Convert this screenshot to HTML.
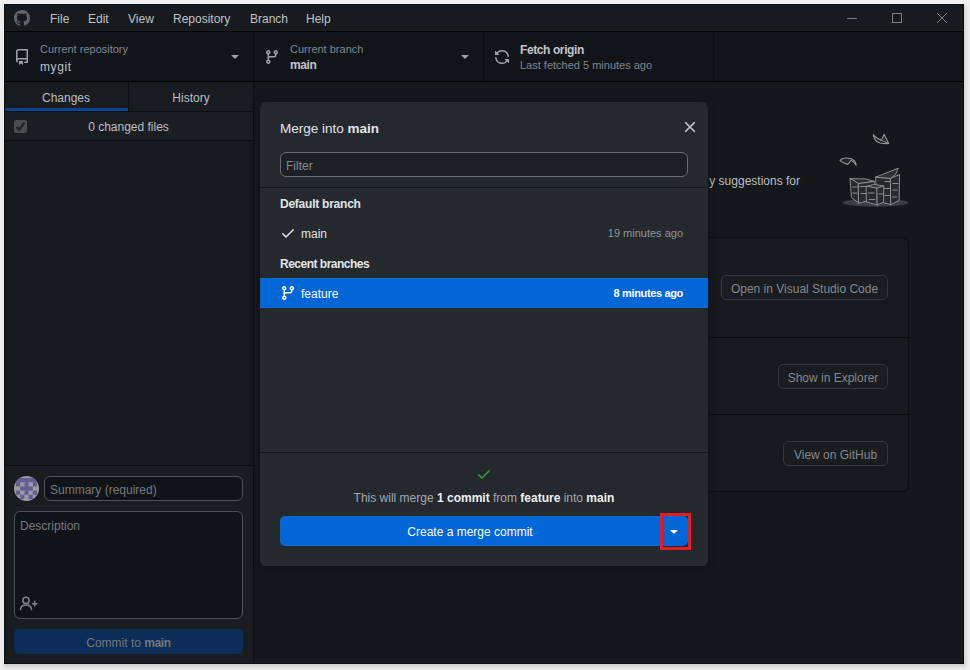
<!DOCTYPE html>
<html><head><meta charset="utf-8">
<style>
*{box-sizing:border-box;margin:0;padding:0}
html,body{width:970px;height:670px;overflow:hidden;background:#f0f0f0;font-family:"Liberation Sans",sans-serif;font-size:12px;color:#d1d5da}
.a{position:absolute;white-space:nowrap}
b{font-weight:bold;letter-spacing:-0.4px}
#win{position:absolute;left:4px;top:4px;width:960px;height:660px;background:#171b1e;overflow:hidden}
#sh{position:absolute;left:4px;top:4px;width:960px;height:660px;background:#222;box-shadow:1px 2px 4px 1px rgba(0,0,0,.15)}
#hl{position:absolute;left:3px;top:3px;width:961px;height:661px;background:#f3f3f3}
#edge{position:absolute;left:4px;top:4px;width:960px;height:660px;border:1px solid #0a0d10;z-index:5}
#title{position:absolute;left:0;top:0;width:960px;height:28px;background:#171b1e;border-bottom:1px solid #000}
.menu{position:absolute;top:8px;font-size:12px;color:#bfc2c6;line-height:14px}
#toolbar{position:absolute;left:0;top:28px;width:960px;height:50px;background:#121518;border-bottom:1px solid #000}
.tsec{position:absolute;top:0;height:49px;border-right:1px solid #0b0c0d}
.lbl{position:absolute;font-size:11px;color:#80868c;line-height:13px;white-space:nowrap}
.val{position:absolute;font-size:12px;color:#c2c6cb;line-height:14px;white-space:nowrap}
#left{position:absolute;left:0;top:78px;width:250px;height:582px;background:#16191c;border-right:1px solid #0c0e10}
#right{position:absolute;left:250px;top:78px;width:710px;height:582px;background:#15181b}
#modal{position:absolute;left:256px;top:98px;width:448px;height:464px;background:#24292e;border-radius:6px;overflow:hidden;box-shadow:0 2px 10px rgba(0,0,0,.4)}
.btn2{position:absolute;height:25px;border:1px solid #34383d;background:#1a1d20;border-radius:5px;color:#84888d;font-size:12px;line-height:26px;text-align:center}
</style></head>
<body>
<div id="sh"></div>
<div id="hl"></div>
<div id="win">
  <div id="title">
    <svg class="a" style="left:10px;top:6px" width="16" height="16" viewBox="0 0 16 16"><path fill-rule="evenodd" fill="#616568" d="M8 0C3.58 0 0 3.58 0 8c0 3.540 2.290 6.530 5.470 7.590.4.07.55-.15.55-.38 0-.19-.01-.82-.01-1.49-2.010.37-2.530-.49-2.690-.94-.09-.23-.48-.94-.82-1.13-.28-.15-.68-.52-.01-.53.63-.01 1.080.58 1.230.82.72 1.210 1.870.87 2.330.66.07-.52.28-.87.51-1.07-1.780-.2-3.640-.89-3.640-3.950 0-.87.31-1.590.82-2.150-.08-.2-.36-1.020.08-2.120 0 0 .67-.21 2.200.82.64-.18 1.320-.27 2-.27.68 0 1.360.09 2 .27 1.530-1.040 2.200-.82 2.200-.82.44 1.100.16 1.920.08 2.120.51.56.82 1.270.82 2.150 0 3.070-1.870 3.750-3.650 3.950.29.25.54.73.54 1.480 0 1.070-.01 1.930-.01 2.200 0 .21.15.46.55.38A8.013 8.013 0 0 0 16 8c0-4.42-3.58-8-8-8z"/></svg>
    <div class="menu" style="left:46px">File</div>
    <div class="menu" style="left:84px">Edit</div>
    <div class="menu" style="left:124px">View</div>
    <div class="menu" style="left:169px">Repository</div>
    <div class="menu" style="left:246px">Branch</div>
    <div class="menu" style="left:302px">Help</div>
    <div class="a" style="left:843px;top:14px;width:10px;height:1px;background:#7d8085"></div>
    <div class="a" style="left:888px;top:9px;width:10px;height:10px;border:1px solid #7d8085"></div>
    <svg class="a" style="left:932px;top:8px" width="12" height="12" viewBox="0 0 12 12"><path d="M1 1L11 11M11 1L1 11" stroke="#7d8085" stroke-width="1"/></svg>
  </div>
  <div id="toolbar">
    <div class="tsec" style="left:0;width:250px"></div>
    <div class="tsec" style="left:250px;width:230px"></div>
    <div class="tsec" style="left:480px;width:230px"></div>
    <svg class="a" style="left:10px;top:17px" width="16" height="16" viewBox="0 0 16 16"><path fill-rule="evenodd" fill="#9ea2a7" d="M2 2.5A2.5 2.5 0 0 1 4.5 0h8.75a.75.75 0 0 1 .75.75v12.5a.75.75 0 0 1-.75.75h-2.5a.75.75 0 1 1 0-1.5h1.750v-2h-8a1 1 0 0 0-.714 1.700.75.75 0 0 1-1.072 1.050A2.495 2.495 0 0 1 2 11.5v-9zm10.5-1V9h-8c-.356 0-.694.074-1 .208V2.5a1 1 0 0 1 1-1h8zM5 12.25v3.25a.25.25 0 0 0 .4.2l1.45-1.087a.25.25 0 0 1 .3 0L8.6 15.7a.25.25 0 0 0 .4-.2v-3.25a.25.25 0 0 0-.25-.25h-3.5a.25.25 0 0 0-.25.25z"/></svg>
    <div class="lbl" style="left:36px;top:11px">Current repository</div>
    <div class="val" style="left:36px;top:28px;letter-spacing:0.6px;color:#bfc3c8">mygit</div>
    <svg class="a" style="left:223px;top:16px" width="16" height="16" viewBox="0 0 16 16"><path fill-rule="evenodd" fill="#9ea2a7" d="M4.427 7.427l3.396 3.396a.25.25 0 0 0 .354 0l3.396-3.396A.25.25 0 0 0 11.396 7H4.604a.25.25 0 0 0-.177.427z"/></svg>
    <svg class="a" style="left:260px;top:17px" width="16" height="16" viewBox="0 0 16 16"><path fill-rule="evenodd" fill="#9ea2a7" d="M11.75 2.5a.75.75 0 1 0 0 1.5.75.75 0 0 0 0-1.5zm-2.25.75a2.25 2.25 0 1 1 3 2.122V6A2.5 2.5 0 0 1 10 8.5H6a1 1 0 0 0-1 1v1.128a2.251 2.251 0 1 1-1.5 0V5.372a2.25 2.25 0 1 1 1.5 0v1.836A2.492 2.492 0 0 1 6 7h4a1 1 0 0 0 1-1v-.628A2.25 2.25 0 0 1 9.5 3.25zM4.25 12a.75.75 0 1 0 0 1.5.75.75 0 0 0 0-1.5zM3.5 3.25a.75.75 0 1 1 1.5 0 .75.75 0 0 1-1.5 0z"/></svg>
    <div class="lbl" style="left:286px;top:11px">Current branch</div>
    <div class="val" style="left:286px;top:26px"><b>main</b></div>
    <svg class="a" style="left:453px;top:16px" width="16" height="16" viewBox="0 0 16 16"><path fill-rule="evenodd" fill="#9ea2a7" d="M4.427 7.427l3.396 3.396a.25.25 0 0 0 .354 0l3.396-3.396A.25.25 0 0 0 11.396 7H4.604a.25.25 0 0 0-.177.427z"/></svg>
    <svg class="a" style="left:490px;top:17px" width="16" height="16" viewBox="0 0 16 16"><path fill-rule="evenodd" fill="#9ea2a7" d="M8 2.5a5.487 5.487 0 0 0-4.131 1.869l1.204 1.204A.25.25 0 0 1 4.896 6H1.25A.25.25 0 0 1 1 5.75V2.104a.25.25 0 0 1 .427-.177l1.38 1.38A7.001 7.001 0 0 1 14.95 7.16a.75.75 0 1 1-1.49.178A5.501 5.501 0 0 0 8 2.5zM1.705 8.005a.75.75 0 0 1 .834.656 5.501 5.501 0 0 0 9.592 2.97l-1.204-1.204a.25.25 0 0 1 .177-.427h3.646a.25.25 0 0 1 .25.25v3.646a.25.25 0 0 1-.427.177l-1.38-1.38A7.001 7.001 0 0 1 1.05 8.84a.75.75 0 0 1 .656-.834z"/></svg>
    <div class="val" style="left:516px;top:11px"><b>Fetch origin</b></div>
    <div class="lbl" style="left:516px;top:27px">Last fetched 5 minutes ago</div>
  </div>
  <div id="left">
    <div class="a" style="left:0;top:0;width:249px;height:30px;background:#191c1f;border-bottom:1px solid #0c0e10"></div>
    <div class="a" style="left:124px;top:0;width:1px;height:29px;background:#0c0e10"></div>
    <div class="a" style="left:0;top:26px;width:124px;height:3px;background:#08458f"></div>
    <div class="a" style="left:0;top:9px;width:124px;text-align:center;color:#babec3;line-height:14px">Changes</div>
    <div class="a" style="left:125px;top:9px;width:124px;text-align:center;color:#babec3;line-height:14px">History</div>
    <div class="a" style="left:0;top:30px;width:249px;height:29px;background:#1b1e21;border-bottom:1px solid #0c0e10"></div>
    <div class="a" style="left:10px;top:38px;width:13px;height:13px;background:#4a4b4d;border-radius:2px"></div>
    <svg class="a" style="left:10px;top:38px" width="13" height="13" viewBox="0 0 13 13"><path d="M2.4 6.9L5.2 9.6L10.4 2.7" fill="none" stroke="#1f2123" stroke-width="2.1"/></svg>
    <div class="a" style="left:0;top:38px;width:249px;text-align:center;color:#babec3;line-height:14px">0 changed files</div>
    <div class="a" style="left:0;top:383px;width:249px;height:199px;background:#1a1d20;border-top:1px solid #0c0e10"></div>
    <div class="a" style="left:10px;top:394px;width:25px;height:25px;border-radius:50%;overflow:hidden;background:#9c9c9c">
      <svg width="25" height="25" viewBox="0 0 25 25" style="display:block"><g fill="#625e9a"><rect x="2" y="2" width="21" height="4.2"/><rect x="2" y="6.2" width="4.2" height="4.2"/><rect x="10.4" y="6.2" width="4.2" height="4.2"/><rect x="18.8" y="6.2" width="4.2" height="4.2"/><rect x="6.2" y="10.4" width="12.6" height="4.2"/><rect x="2" y="14.6" width="4.2" height="4.2"/><rect x="10.4" y="14.6" width="4.2" height="4.2"/><rect x="18.8" y="14.6" width="4.2" height="4.2"/><rect x="6.2" y="18.8" width="4.2" height="4.2"/><rect x="14.6" y="18.8" width="4.2" height="4.2"/></g></svg>
    </div>
    <div class="a" style="left:40px;top:394px;width:199px;height:25px;border:1px solid #4c5157;border-radius:6px;background:#111417"></div>
    <div class="a" style="left:46px;top:401px;color:#74797f;line-height:14px">Summary (required)</div>
    <div class="a" style="left:10px;top:429px;width:229px;height:108px;border:1px solid #4c5157;border-radius:6px;background:#111417"></div>
    <div class="a" style="left:16px;top:437px;color:#74797f;line-height:14px">Description</div>
    <svg class="a" style="left:14px;top:513px" width="22" height="16" viewBox="18 595 22 16"><g fill="none" stroke="#7f8388" stroke-width="1.5" stroke-linecap="round"><circle cx="26" cy="600.4" r="3.1"/><path d="M20.5 609.5C20.7 606.5 23 604.9 26 604.9C29 604.9 31.3 606.5 31.5 609.5"/><path d="M31.8 603.7H37.6M34.7 600.8V606.6" stroke-linecap="butt"/></g></svg>
    <div class="a" style="left:10px;top:547px;width:229px;height:25px;border-radius:5px;background:#0b2d57;color:#72777c;text-align:center;line-height:29px">Commit to <b>main</b></div>
  </div>
  <div id="right">
    <div class="a" style="right:164px;top:92px;color:#babec3;font-size:12px;line-height:14px">y suggestions for</div>
    <svg class="a" style="left:581px;top:45px" width="80" height="85" viewBox="835 127 80 85">
      <ellipse cx="875.5" cy="202.8" rx="33" ry="3.8" fill="#3b3e42"/>
      <g fill="#27292c" stroke="#969696" stroke-width="0.9" stroke-linejoin="round" stroke-linecap="round">
        <path d="M876 177L890.8 178.3L891 204.5L877.5 201.5Z"/>
        <path d="M890.8 178.3L899.5 174.5L899.2 200.5L891 204.5Z"/>
        <path d="M876 177L898.3 168.2L895.5 174.6L890.8 178.3Z" fill="#2e3034"/>
        <path d="M850.3 178.6L865.8 178.9L874.3 181.4L858.6 183.6Z" fill="#2e3034"/>
        <path d="M850.3 178.6L858.6 183.6L858.8 203.2L851.8 197.8Z"/>
        <path d="M858.6 183.6L874.3 181.4L874.5 199L858.8 203.2Z"/>
        <path d="M866.5 186.3L873.6 184.5L883.7 186L877.2 188.1Z" fill="#2e3034"/>
        <path d="M866.5 186.3L877.2 188.1L877.3 205L866.8 202Z"/>
        <path d="M877.2 188.1L883.7 186L883.6 202L877.3 205Z"/>
        <path d="M885 181.5H890.5M893 183.5H898M884.5 188.5H890.5M893 190H897.5M885 195.5H890M892.5 197H897M852.5 187H857.5M860 186.5H866M853 193H857M861 193.5H865.5M868.5 193H874M869 199.5H875M879 194H882.5" fill="none"/>
        <path d="M873.3 134.6Q874.5 141.5 880 143Q884.5 144 888.7 143.4L884 134.3Q882.5 139 880.5 140Q876.5 138.5 873.3 134.6Z" fill="#222428" stroke-width="1.1"/>
        <path d="M880.5 140L888.7 143.4" fill="none"/>
        <path d="M840.1 160.6Q842 158 846 158Q852 158 854.8 161.2Q856 163 856.1 165.3Q853.5 161 851 160.3Q849.5 163 847.6 164.4Q843 163 840.1 160.6Z" fill="#222428" stroke-width="1.1"/>
      </g>
    </svg>
    <div class="a" style="left:380px;top:155px;width:275px;height:255px;border:1px solid #0c0e10;border-radius:6px;background:#171a1d"></div>
    <div class="a" style="left:381px;top:255px;width:273px;height:1px;background:#0c0e10"></div>
    <div class="a" style="left:381px;top:332px;width:273px;height:1px;background:#0c0e10"></div>
    <div class="btn2" style="left:467px;top:193px;width:167px">Open in Visual Studio Code</div>
    <div class="btn2" style="left:524px;top:282px;width:110px">Show in Explorer</div>
    <div class="btn2" style="left:529px;top:359px;width:105px">View on GitHub</div>
  </div>
  <div id="modal">
    <div class="a" style="left:20px;top:18px;font-size:13.5px;color:#e1e4e8;line-height:17px">Merge into <b style="letter-spacing:0">main</b></div>
    <svg class="a" style="left:424px;top:18.6px" width="12" height="12" viewBox="0 0 12 12"><path d="M1.6 1.6L10.4 10.4M10.4 1.6L1.6 10.4" stroke="#b9bdc2" stroke-width="1.5" stroke-linecap="round"/></svg>
    <div class="a" style="left:20px;top:50px;width:408px;height:25px;border:1px solid #676e75;border-radius:6px;background:#1c2024"></div>
    <div class="a" style="left:26px;top:57px;color:#868b91;line-height:14px">Filter</div>
    <div class="a" style="left:0;top:85px;width:448px;height:1px;background:#15171a"></div>
    <div class="a" style="left:20px;top:95px;color:#e1e4e8;line-height:14px"><b style="letter-spacing:-0.24px">Default branch</b></div>
    <svg class="a" style="left:20px;top:123px" width="16" height="16" viewBox="0 0 16 16"><path fill-rule="evenodd" fill="#e2e4e7" d="M13.78 4.22a.75.75 0 0 1 0 1.06l-7.25 7.25a.75.75 0 0 1-1.06 0L2.22 9.28a.75.75 0 0 1 1.06-1.06L6 10.94l6.72-6.72a.75.75 0 0 1 1.06 0z"/></svg>
    <div class="a" style="left:41px;top:125px;color:#e1e4e8;line-height:14px">main</div>
    <div class="a" style="left:323px;top:124px;width:100px;text-align:right;color:#8f959b;font-size:11px;line-height:14px">19 minutes ago</div>
    <div class="a" style="left:20px;top:155px;color:#e1e4e8;line-height:14px"><b style="letter-spacing:-0.5px">Recent branches</b></div>
    <div class="a" style="left:0;top:176px;width:448px;height:30px;background:#0366d6"></div>
    <svg class="a" style="left:20px;top:183px" width="16" height="16" viewBox="0 0 16 16"><path fill-rule="evenodd" fill="#fff" d="M11.75 2.5a.75.75 0 1 0 0 1.5.75.75 0 0 0 0-1.5zm-2.25.75a2.25 2.25 0 1 1 3 2.122V6A2.5 2.5 0 0 1 10 8.5H6a1 1 0 0 0-1 1v1.128a2.251 2.251 0 1 1-1.5 0V5.372a2.25 2.25 0 1 1 1.5 0v1.836A2.492 2.492 0 0 1 6 7h4a1 1 0 0 0 1-1v-.628A2.25 2.25 0 0 1 9.5 3.25zM4.25 12a.75.75 0 1 0 0 1.5.75.75 0 0 0 0-1.5zM3.5 3.25a.75.75 0 1 1 1.5 0 .75.75 0 0 1-1.5 0z"/></svg>
    <div class="a" style="left:41px;top:185px;color:#fff;line-height:14px">feature</div>
    <div class="a" style="left:323px;top:184px;width:100px;text-align:right;color:#fff;font-size:11px;line-height:14px;font-weight:bold;letter-spacing:-0.35px">8 minutes ago</div>
    <div class="a" style="left:0;top:350px;width:448px;height:114px;background:#24292e;border-top:1px solid #15171a"></div>
    <svg class="a" style="left:216px;top:364px" width="16" height="16" viewBox="0 0 16 16"><path fill-rule="evenodd" fill="#2ea043" d="M13.78 4.22a.75.75 0 0 1 0 1.06l-7.25 7.25a.75.75 0 0 1-1.06 0L2.22 9.28a.75.75 0 0 1 1.06-1.06L6 10.94l6.72-6.72a.75.75 0 0 1 1.06 0z"/></svg>
    <div class="a" style="left:0;top:389px;width:448px;text-align:center;color:#a3a8ae;line-height:14px">This will merge <b style="color:#eef0f2;letter-spacing:0">1 commit</b> from <b style="color:#eef0f2;letter-spacing:0">feature</b> into <b style="color:#eef0f2;letter-spacing:0">main</b></div>
    <div class="a" style="left:20px;top:414px;width:408px;height:30px;background:#0366d6;border-radius:5px"></div>
    <div class="a" style="left:20px;top:423px;width:380px;text-align:center;color:#fff;line-height:14px">Create a merge commit</div>
    <svg class="a" style="left:406px;top:421px" width="16" height="16" viewBox="0 0 16 16"><path fill-rule="evenodd" fill="#fff" d="M4.427 7.427l3.396 3.396a.25.25 0 0 0 .354 0l3.396-3.396A.25.25 0 0 0 11.396 7H4.604a.25.25 0 0 0-.177.427z"/></svg>
    <div class="a" style="left:400px;top:411px;width:31px;height:37px;border:3px solid #e21f26"></div>
  </div>
</div>
<div id="edge"></div>
</body></html>
